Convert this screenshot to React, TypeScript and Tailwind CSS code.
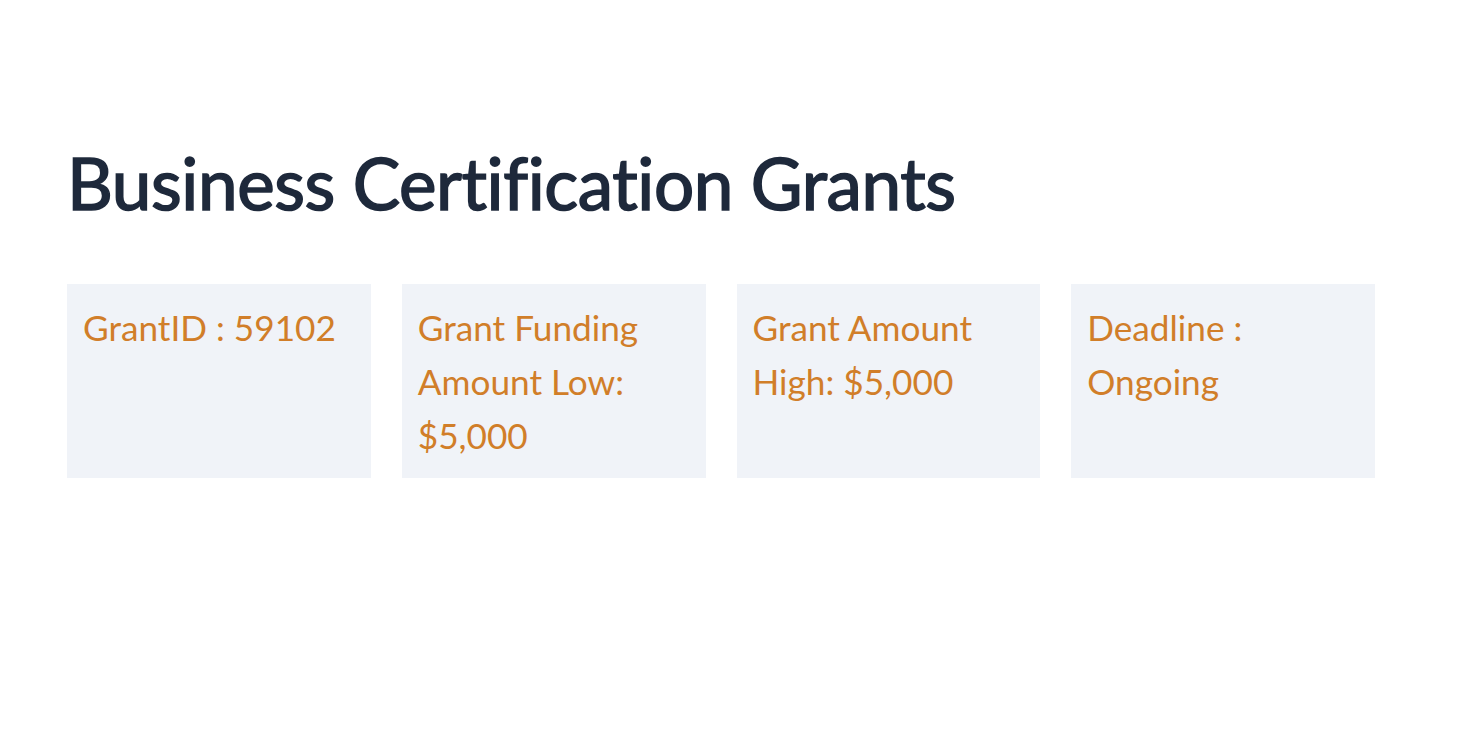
export default function App() {
  const cards = [
    'GrantID : 59102',
    'Grant Funding Amount Low: $5,000',
    'Grant Amount High: $5,000',
    'Deadline : Ongoing',
  ];

  return (
    <div className="min-h-screen bg-white font-['Lato','Liberation_Sans',sans-serif]">
      <div className="pl-[67px] pt-[140px]">
        <h1 className="text-[71px] leading-[1.2] font-normal text-[#1e293b] tracking-[-0.4px] [-webkit-text-stroke:1.6px_#1e293b]">
          Business Certification Grants
        </h1>

        <div className="mt-[59px] grid w-[1308px] grid-cols-4 gap-[31px]">
          {cards.map((c) => (
            <div key={c} className="h-[194px] bg-[#f0f3f8] px-[16px] py-[16px]">
              <p className="text-[35.2px] leading-[54px] text-[#d17e29]">{c}</p>
            </div>
          ))}
        </div>
      </div>
    </div>
  );
}
